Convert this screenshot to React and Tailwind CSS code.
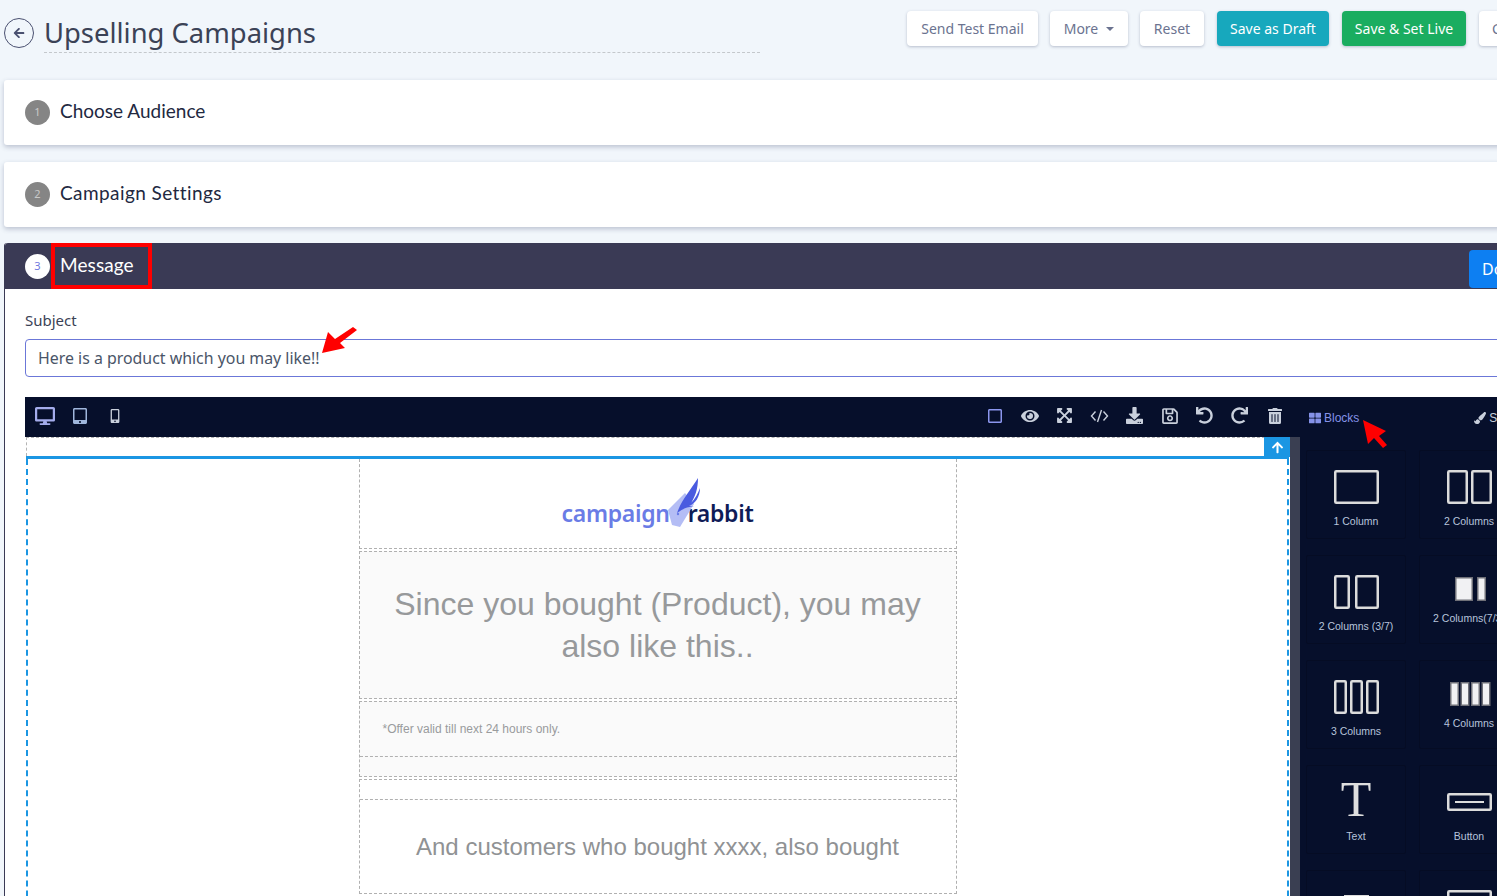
import React from "react";
import { FaArrowLeft, FaArrowUp, FaDesktop, FaTabletAlt, FaMobileAlt, FaRegSquare, FaEye, FaExpandArrowsAlt, FaDownload, FaRegSave, FaUndo, FaRedo, FaTrashAlt, FaThLarge, FaPaintBrush } from "react-icons/fa";

const noto = "font-['Noto_Sans',sans-serif]";
const head = "font-['Lato',sans-serif]";
const arial = "font-['Liberation_Sans',Arial,sans-serif]";

function Btn({ children, className }) {
  return (
    <button className={`h-[35px] rounded-[4px] text-[14px] shadow-[0_1px_3px_rgba(50,60,100,0.3)] flex items-center justify-center shrink-0 ${className}`}>
      {children}
    </button>
  );
}

function Card({ n, title, className, titleClass }) {
  return (
    <div className={`h-[65px] bg-white rounded-[3px] shadow-[0_2px_5px_rgba(60,70,110,0.3)] flex items-center pl-[21px] ${className}`}>
      <span className={`w-[25px] h-[25px] rounded-full bg-[#858585] text-[#c9c9c9] text-[11px] flex items-center justify-center ${noto}`}>{n}</span>
      <span className={`ml-[10px] text-[19px] text-[#22283f] -mt-[3px] ${head} ${titleClass}`}>{title}</span>
    </div>
  );
}

const R = ({ x, y, w, h }) => <rect x={x + 1.25} y={y + 1.25} width={w - 2.5} height={h - 2.5} fill="none" stroke="#dcdcdc" strokeWidth="2.5" rx="1" />;
const F = ({ x, y, w, h }) => <rect x={x + 0.75} y={y + 0.75} width={w - 1.5} height={h - 1.5} fill="#f1f1f3" stroke="#6f7078" strokeWidth="1.5" />;

const tiles = [
  { label: "1 Column", pt: 20, h: 34, mt: 11, icon: <R x={0} y={0} w={45} h={34} /> },
  { label: "2 Columns", pt: 20, h: 34, mt: 11, icon: <><R x={0} y={0} w={21} h={34} /><R x={24} y={0} w={21} h={34} /></> },
  { label: "2 Columns (3/7)", pt: 20, h: 34, mt: 11, icon: <><R x={0} y={0} w={16} h={34} /><R x={21} y={0} w={24} h={34} /></> },
  { label: "2 Columns(7/3)", pt: 22, h: 24, mt: 11, icon: <><F x={8} y={0} w={18} h={24} /><F x={30} y={0} w={9} h={24} /></> },
  { label: "3 Columns", pt: 20, h: 34, mt: 11, icon: <><R x={0} y={0} w={13} h={34} /><R x={16} y={0} w={13} h={34} /><R x={32} y={0} w={13} h={34} /></> },
  { label: "4 Columns", pt: 22, h: 24, mt: 11, icon: <><F x={3} y={0} w={9} h={24} /><F x={13.5} y={0} w={9} h={24} /><F x={24} y={0} w={9} h={24} /><F x={34.5} y={0} w={9} h={24} /></> },
  { label: "Text", text: true },
  { label: "Button", pt: 28, h: 18, mt: 19, icon: <><R x={0} y={0} w={45} h={18} /><rect x={8} y={8} width={29} height={2} fill="#dcdcdc" /></> },
  { label: "", pt: 25, h: 34, mt: 11, icon: <rect x={10} y={0} width={25} height={2} fill="#dcdcdc" /> },
  { label: "", pt: 20, h: 34, mt: 11, icon: <R x={0} y={0} w={45} h={34} /> },
];

function Tile({ t }) {
  return (
    <div className={`w-[100px] h-[89px] border border-[#050c24] rounded-[2px] flex flex-col items-center text-[10.5px] text-[#b7c4dc] ${arial}`} style={{ paddingTop: t.text ? 6 : t.pt - 1 }}>
      {t.text ? (
        <span className="font-['Liberation_Serif',serif] text-[#dedede] text-[50px] leading-[54px] h-[54px]">T</span>
      ) : (
        <svg width="45" height={t.h} viewBox={`0 0 45 ${t.h}`}>{t.icon}</svg>
      )}
      <span className="h-[12px] leading-[12px] whitespace-nowrap" style={{ marginTop: t.text ? 4 : t.mt }}>{t.label}</span>
    </div>
  );
}

const tb = "w-[35px] flex justify-center text-[#c9d0dc]";

export default function App() {
  return (
    <div className="w-[1497px] h-[896px] overflow-hidden bg-[#f1f6fb] relative">
      <div className="w-[1700px] pl-[4px] pt-[11px]">
        {/* top bar */}
        <div className="flex h-[69px]">
          <div className="w-[30px] h-[30px] mt-[7px] rounded-full border border-[#4a5070] flex items-center justify-center text-[#4a5070] text-[12px] shrink-0">
            <FaArrowLeft />
          </div>
          <div className={`ml-[10px] w-[716px] h-[42px] border-b border-dashed border-[#c4c8cc] text-[27.4px] leading-[44px] text-[#3b4256] shrink-0 ${noto}`}>Upselling Campaigns</div>
          <div className={`ml-[147px] flex gap-[12px] ${noto}`}>
            <Btn className="w-[131px] bg-white text-[#6b7390]">Send Test Email</Btn>
            <Btn className="w-[78px] bg-white text-[#6b7390]">More<span className="ml-[8px] border-x-[4px] border-x-transparent border-t-[4px] border-t-[#6b7390]" /></Btn>
            <Btn className="w-[64px] bg-white text-[#6b7390]">Reset</Btn>
            <Btn className="w-[112px] ml-[1px] bg-[#17a8bd] text-white">Save as Draft</Btn>
            <Btn className="w-[124px] ml-[1px] bg-[#1aad60] text-white">Save &amp; Set Live</Btn>
            <Btn className="w-[80px] ml-[1px] bg-white text-[#6b7390] !justify-start pl-[13px]">Cancel</Btn>
          </div>
        </div>

        <Card n="1" title="Choose Audience" className="mb-[17px]" />
        <Card n="2" title="Campaign Settings" className="mb-[16px]" titleClass="tracking-[0.42px]" />

        {/* message card */}
        <div className="bg-white border-l border-[#3a3a55] rounded-t-[3px]">
          <div className="h-[46px] bg-[#3a3a55] flex items-center pl-[20px] relative rounded-t-[3px]">
            <span className={`w-[25px] h-[25px] rounded-full bg-white text-[#6f78e0] text-[11px] flex items-center justify-center ${noto}`}>3</span>
            <span className={`ml-[10px] text-[19px] text-white -mt-[2px] tracking-[0.1px] ${head}`}>Message</span>
            <div className="absolute left-[46px] top-0 w-[101px] h-[46px] border-[4px] border-[#ff0000]" />
            <div className={`absolute left-[1464px] top-[7px] w-[90px] h-[38px] rounded-[4px] bg-[#0d7ff2] text-white text-[16px] flex items-center pl-[13px] ${noto}`}>Done</div>
          </div>
          <div className="pl-[20px] pr-[200px]">
            <div className={`pt-[21px] text-[15px] leading-[20px] text-[#3b4256] ${noto}`}>Subject</div>
            <div className={`mt-[9px] h-[38px] w-[1500px] border border-[#6b77d8] rounded-[4px] flex items-center pl-[12px] pt-[2px] text-[15.9px] text-[#4a5568] ${noto}`}>Here is a product which you may like!!</div>

            {/* editor */}
            <div className="mt-[20px] bg-[#060f2b] w-[1500px] h-[600px]">
              <div className="h-[40px] flex items-center text-[16px]">
                <div className="flex items-center pl-[2px] pb-[3px]">
                  <span className={`${tb} !text-[#a4acec] text-[20px]`}><FaDesktop /></span>
                  <span className={`${tb} !text-[#9fb6dc]`}><FaTabletAlt /></span>
                  <span className={`${tb} text-[14px]`}><FaMobileAlt /></span>
                </div>
                <div className="flex items-center ml-[845px] pb-[3px]">
                  <span className={`${tb} !text-[#8b96ee]`}><FaRegSquare /></span>
                  <span className={`${tb} text-[18px]`}><FaEye /></span>
                  <span className={`${tb} text-[17px]`}><FaExpandArrowsAlt /></span>
                  <span className={tb}>
                    <svg width="19" height="14" viewBox="0 0 19 14" fill="none" stroke="#c9d0dc" strokeWidth="1.4">
                      <path d="M5.5 2.5 L1.5 7 L5.5 11.5" />
                      <path d="M13.5 2.5 L17.5 7 L13.5 11.5" />
                      <path d="M11.5 1 L7.5 13" />
                    </svg>
                  </span>
                  <span className={`${tb} text-[17px]`}><FaDownload /></span>
                  <span className={`${tb} text-[18px]`}><FaRegSave /></span>
                  <span className={`${tb} text-[17px]`}><FaUndo /></span>
                  <span className={`${tb} text-[17px]`}><FaRedo /></span>
                  <span className={tb}><FaTrashAlt /></span>
                </div>
                <div className={`ml-[17px] flex items-center gap-[3px] text-[12px] text-[#8592e8] mt-[1px] ${arial}`}><FaThLarge className="text-[12px]" />Blocks</div>
                <div className={`ml-[115px] flex items-center gap-[3px] text-[12px] text-[#c9d0dc] mt-[1px] ${arial}`}><FaPaintBrush className="text-[12px]" />Settings</div>
              </div>

              <div className="flex">
                {/* canvas */}
                <div className="w-[1265px] h-[560px] bg-white relative shrink-0">
                  <div className="h-[19px] ml-[1px] border-t border-l border-dashed border-[#b4b4b4]" />
                  <div className="absolute right-0 top-0 w-[26px] h-[20px] bg-[#1b96e3] text-white text-[13px] flex items-center justify-center"><FaArrowUp /></div>
                  <div className="border-t-[3px] border-[#1b96e3] ml-[1px] mr-[1px] h-[541px]">
                    <div className="h-full border-x-[2px] border-dashed border-[#1b96e3]">
                      <div className={`w-[598px] mx-auto text-[#999b9d] ${arial}`}>
                        <div className="h-[90px] border-x border-b border-dashed border-[#b0b0b0] flex items-center justify-center relative">
                          <div className={`flex items-baseline text-[23px] font-semibold tracking-[-0.3px] leading-none mt-[20px] ${noto}`}>
                            <span className="text-[#6a7ce6]">campaign</span>
                            <span className="w-[18px]" />
                            <span className="text-[#0f1c57]">rabbit</span>
                          </div>
                          <svg className="absolute left-[300px] top-[18px]" width="52" height="52" viewBox="0 0 52 52">
                            <path d="M8 33 L25 16 L34 27 L20 50 L12 48 Z" fill="#b4bdf5" />
                            <path d="M17 36 C22 22 30 14 38 1 C38 12 35 20 31 26 C35 22 38 16 40 11 C40 20 35 27 29 29 L36 30 C29 29 24 31 17 36 Z" fill="#4a5be0" />
                            <circle cx="18" cy="37" r="1.2" fill="#6a7ce6" />
                          </svg>
                        </div>
                        <div className="h-[148px] mt-[2px] bg-[#fafafa] border border-dashed border-[#b0b0b0] flex items-center justify-center text-center text-[32px] leading-[42px] px-[20px] text-[#97999b]">
                          <span>Since you bought (Product), you may<br />also like this..</span>
                        </div>
                        <div className="mt-[2px] bg-[#fafafa] border border-dashed border-[#b0b0b0]">
                          <div className="h-[55px] border-b border-dashed border-[#b0b0b0] flex items-center pl-[23px] text-[12px]">*Offer valid till next 24 hours only.</div>
                          <div className="h-[19px]" />
                        </div>
                        <div className="mt-[2px] border border-dashed border-[#b0b0b0]">
                          <div className="h-[20px] border-b border-dashed border-[#b0b0b0]" />
                          <div className="h-[93px] flex items-center justify-center text-[24px] text-[#909294]">And customers who bought xxxx, also bought</div>
                        </div>
                        <div className="mt-[2px] h-[20px] border-t border-x border-dashed border-[#b0b0b0]" />
                      </div>
                    </div>
                  </div>
                </div>
                {/* scrollbar */}
                <div className="w-[10px] h-[560px] bg-[#3a3f52] shrink-0" />
                {/* blocks */}
                <div className="pl-[6px] pt-[13px] grid grid-cols-[100px_100px] gap-x-[13px] gap-y-[16px] content-start">
                  {tiles.map((t, i) => <Tile key={i} t={t} />)}
                </div>
              </div>
            </div>
          </div>
        </div>
      </div>

      {/* annotation arrows */}
      <svg className="absolute left-[318px] top-[322px]" width="42" height="36" viewBox="0 0 42 36">
        <polygon points="4,31 10,10 17,17 35,5 39,8 22,21 27,26" fill="#ff0000" />
      </svg>
      <svg className="absolute left-[1360px] top-[416px]" width="32" height="36" viewBox="0 0 32 36">
        <polygon points="3,4 26,15 19,20 27,29 23,32 14,22 8,28" fill="#ff0000" />
      </svg>
    </div>
  );
}
